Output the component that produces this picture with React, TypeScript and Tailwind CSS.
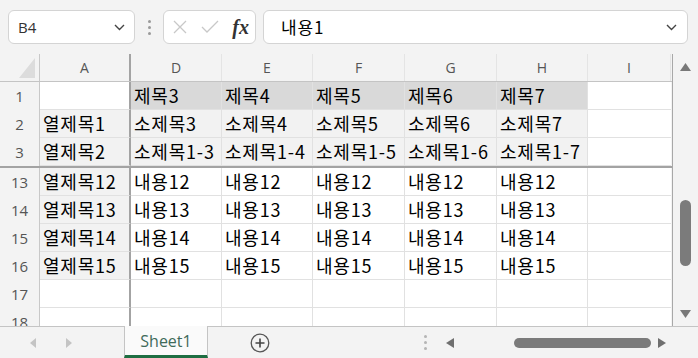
import React from "react";

const cols = ["A", "D", "E", "F", "G", "H", "I"];

type Row = { n: string; a: string; cells: string[]; kind: "title" | "sub" | "body" | "empty" };

const topRows: Row[] = [
    { n: "1", a: "", cells: ["제목3", "제목4", "제목5", "제목6", "제목7"], kind: "title" },
    { n: "2", a: "열제목1", cells: ["소제목3", "소제목4", "소제목5", "소제목6", "소제목7"], kind: "sub" },
    { n: "3", a: "열제목2", cells: ["소제목1-3", "소제목1-4", "소제목1-5", "소제목1-6", "소제목1-7"], kind: "sub" },
];

const bottomRows: Row[] = [
    { n: "13", a: "열제목12", cells: Array(5).fill("내용12"), kind: "body" },
    { n: "14", a: "열제목13", cells: Array(5).fill("내용13"), kind: "body" },
    { n: "15", a: "열제목14", cells: Array(5).fill("내용14"), kind: "body" },
    { n: "16", a: "열제목15", cells: Array(5).fill("내용15"), kind: "body" },
    { n: "17", a: "", cells: ["", "", "", "", ""], kind: "empty" },
    { n: "18", a: "", cells: ["", "", "", "", ""], kind: "empty" },
];

const gridCols = "grid grid-cols-[40px_91px_91px_91px_92px_92px_91px_83px]";

function SheetRow({ row }: { row: Row }) {
    const aBg = row.kind === "sub" || row.kind === "body" ? "bg-[#f2f2f2]" : "bg-white";
    const cBg = row.kind === "title" ? "bg-[#d9d9d9]" : row.kind === "sub" ? "bg-[#f2f2f2]" : "bg-white";
    const cellText = "flex items-center pl-[3px] tracking-[0.8px] text-[18px] text-black font-['Noto_Sans_CJK_KR',sans-serif] whitespace-nowrap overflow-hidden";
    return (
        <div className={`${gridCols} h-[28px] shrink-0`}>
            <div className="flex items-center justify-center bg-[#f3f3f3] border-r border-[#c8c8c8] text-[15px] text-[#555] font-['Open_Sans',sans-serif]">
                {row.n}
            </div>
            <div className={`${cellText} ${aBg} border-r-2 border-[#a3a3a3] border-b border-b-[#e1e1e1]`}>{row.a}</div>
            {row.cells.map((c, i) => (
                <div key={i} className={`${cellText} ${cBg} border-r border-b border-[#e1e1e1]`}>{c}</div>
            ))}
            <div className="bg-white border-b border-[#e1e1e1]" />
        </div>
    );
}

export default function App() {
    return (
        <div className="w-[698px] h-[358px] bg-[#f3f3f3] flex flex-col overflow-hidden font-['Open_Sans',sans-serif]">
            {/* formula bar */}
            <div className="h-[54px] flex items-center pl-[8px] pr-[10px] gap-[7px] shrink-0">
                <div className="w-[127px] h-[34px] bg-white border border-[#d4d4d4] rounded-md flex items-center justify-between px-[9px]">
                    <span className="text-[15px] text-[#333]">B4</span>
                    <svg width="11" height="7" viewBox="0 0 11 7"><path d="M1 1l4.5 4.5L10 1" fill="none" stroke="#444" strokeWidth="1.4" /></svg>
                </div>
                <div className="w-[14px] flex flex-col items-center gap-[3px]">
                    <span className="w-[3px] h-[3px] rounded-full bg-[#9a9a9a]" />
                    <span className="w-[3px] h-[3px] rounded-full bg-[#9a9a9a]" />
                    <span className="w-[3px] h-[3px] rounded-full bg-[#9a9a9a]" />
                </div>
                <div className="w-[93px] h-[34px] bg-white border border-[#d4d4d4] rounded-md flex items-center justify-between pl-[8px] pr-[6px]">
                    <svg width="16" height="16" viewBox="0 0 16 16"><path d="M2 2l12 12M14 2L2 14" stroke="#c8c8c8" strokeWidth="1.3" /></svg>
                    <svg width="18" height="14" viewBox="0 0 18 14"><path d="M1 7l5 5L17 1" fill="none" stroke="#c8c8c8" strokeWidth="1.3" /></svg>
                    <span className="text-[20px] italic font-bold font-['Liberation_Serif',serif] text-[#333] leading-none">fx</span>
                </div>
                <div className="flex-1 h-[34px] bg-white border border-[#d4d4d4] rounded-md flex items-center justify-between pl-[17px] pr-[10px]">
                    <span className="text-[17px] tracking-[0.8px] text-black font-['Noto_Sans_CJK_KR',sans-serif]">내용1</span>
                    <svg width="11" height="7" viewBox="0 0 11 7"><path d="M1 1l4.5 4.5L10 1" fill="none" stroke="#444" strokeWidth="1.4" /></svg>
                </div>
            </div>

            {/* grid + vertical scroll */}
            <div className="flex h-[272px] shrink-0">
                <div className="w-[673px] border-r border-[#a8a8a8] flex flex-col overflow-hidden">
                    <div className={`${gridCols} h-[28px] shrink-0 border-b border-[#c4c4c4]`}>
                        <div className="relative border-r border-[#c8c8c8]">
                            <svg className="absolute right-[4px] bottom-[3px]" width="16" height="20" viewBox="0 0 16 20"><path d="M16 0V20H0Z" fill="#dcdcdc" /></svg>
                        </div>
                        {cols.map((c, i) => (
                            <div key={c} className={`flex items-center justify-center text-[14px] text-[#555] ${i === 0 ? "border-r-2 border-[#a3a3a3]" : "border-r border-[#e4e4e4]"}`}>
                                {c}
                            </div>
                        ))}
                    </div>
                    {topRows.map((r) => <SheetRow key={r.n} row={r} />)}
                    <div className="h-[2px] bg-[#a3a3a3] shrink-0" />
                    {bottomRows.map((r) => <SheetRow key={r.n} row={r} />)}
                </div>
                <div className="flex-1 flex flex-col items-center pt-[9px] pb-[8px]">
                    <svg width="11" height="8" viewBox="0 0 11 8"><path d="M5.5 0L11 8H0Z" fill="#787878" /></svg>
                    <div className="mt-[129px] w-[11px] h-[66px] rounded-full bg-[#7b7b7b]" />
                    <div className="flex-1" />
                    <svg width="11" height="8" viewBox="0 0 11 8"><path d="M0 0H11L5.5 8Z" fill="#787878" /></svg>
                </div>
            </div>

            {/* sheet tabs */}
            <div className="flex-1 flex items-stretch border-t border-[#c4c4c4]">
                <div className="w-[124px] flex items-center pl-[30px] gap-[30px]">
                    <svg width="6" height="10" viewBox="0 0 6 10"><path d="M6 0V10L0 5Z" fill="#c4c4c4" /></svg>
                    <svg width="6" height="10" viewBox="0 0 6 10"><path d="M0 0V10L6 5Z" fill="#c4c4c4" /></svg>
                </div>
                <div className="w-[84px] -mt-px bg-[#fafafa] border-x border-[#c4c4c4] border-b-[3px] border-b-[#1e6e42] flex items-center justify-center text-[16px] text-[#3f6b5a]">
                    Sheet1
                </div>
                <div className="w-[104px] flex items-center justify-center">
                    <svg width="20" height="20" viewBox="0 0 20 20"><circle cx="10" cy="10" r="8.8" fill="none" stroke="#555" strokeWidth="1.3" /><path d="M10 5.5v9M5.5 10h9" stroke="#444" strokeWidth="1.6" /></svg>
                </div>
                <div className="w-[93px]" />
                <div className="flex-1 flex items-center">
                    <div className="w-[16px] ml-[12px] flex flex-col items-center gap-[3px]">
                        <span className="w-[3px] h-[3px] rounded-full bg-[#b5b5b5]" />
                        <span className="w-[3px] h-[3px] rounded-full bg-[#b5b5b5]" />
                        <span className="w-[3px] h-[3px] rounded-full bg-[#b5b5b5]" />
                    </div>
                    <svg className="ml-[13px]" width="8" height="10" viewBox="0 0 8 10"><path d="M8 0V10L0 5Z" fill="#6f6f6f" /></svg>
                    <div className="ml-[60px] w-[137px] h-[10px] rounded-full bg-[#7b7b7b]" />
                    <svg className="ml-[7px]" width="8" height="10" viewBox="0 0 8 10"><path d="M0 0V10L8 5Z" fill="#6f6f6f" /></svg>
                </div>
            </div>
        </div>
    );
}
